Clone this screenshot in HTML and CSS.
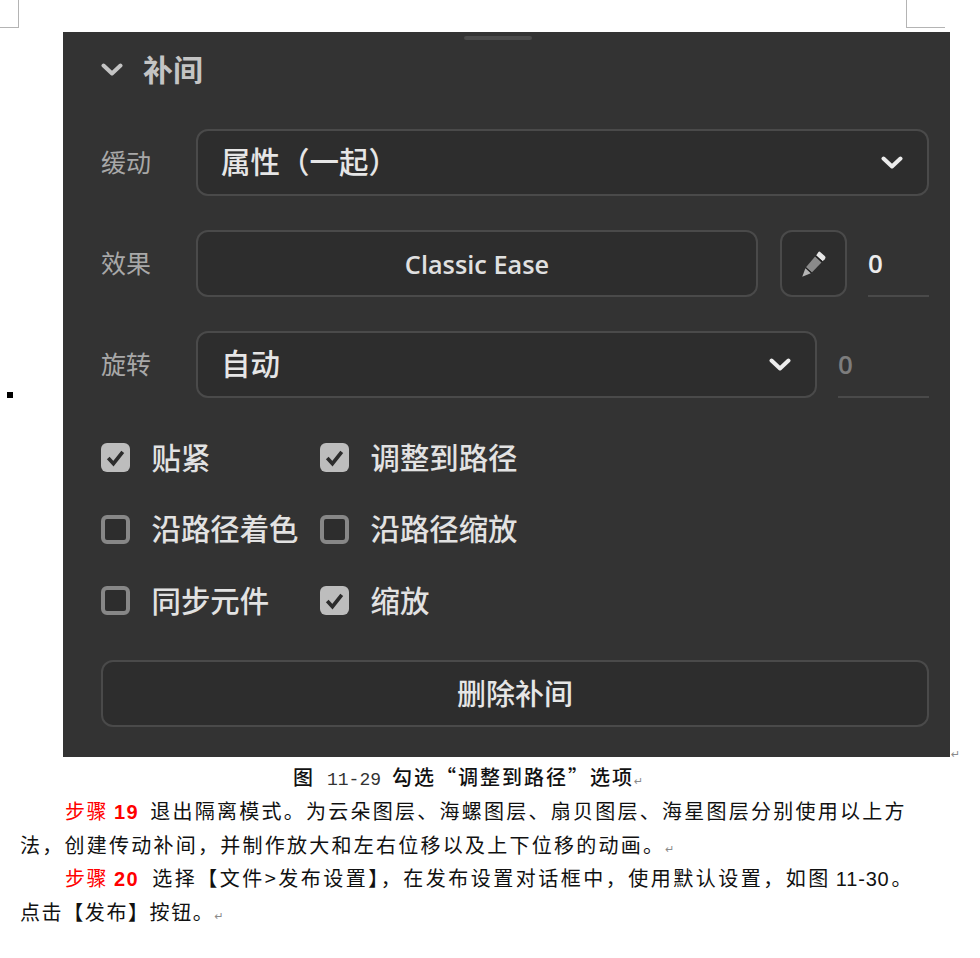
FILE: index.html
```html
<!DOCTYPE html>
<html lang="zh-CN">
<head>
    <meta charset="UTF-8">
    <title>勾选调整到路径选项</title>
    <link rel="stylesheet" href="styles.css">
</head>
<body>
    <!-- 页面裁剪标记 -->
    <div class="crop-mark crop-left"></div>
    <div class="crop-mark crop-right"></div>
    <div class="bullet"></div>

    <div class="figure">
        <div class="panel">
            <div class="handle"></div>

            <div class="panel-title">
                <svg class="chevron title-chevron" viewBox="0 0 22 14"><path d="M2.5 2.5 L11 10.5 L19.5 2.5"/></svg>
                <span>补间</span>
            </div>

            <div class="row">
                <span class="label">缓动</span>
                <div class="box select grow">
                    <span>属性（一起）</span>
                    <svg class="chevron" viewBox="0 0 22 14"><path d="M2.5 2.5 L11 10.5 L19.5 2.5"/></svg>
                </div>
            </div>

            <div class="row">
                <span class="label">效果</span>
                <div class="box center grow effect">Classic Ease</div>
                <div class="box pencil">
                    <svg viewBox="0 0 26 28" width="28" height="30">
                        <path d="M18.5 2.5 L23 6.5 Q24.5 8 23 9.5 L21 11.5 L15 6 L17 3 Q17.7 2 18.5 2.5Z" fill="#e6e6e6"/>
                        <path d="M15 6 L21 11.5 L20 12.5 L14 7Z" fill="#1d1d1d"/>
                        <path d="M14 7 L20 12.5 L11 22 L5.5 17Z" fill="#8a8a8a"/>
                        <path d="M5.5 17 L11 22 L10 22.6 L5 18Z" fill="#1d1d1d"/>
                        <path d="M5 18 L10 22.6 L2 26Z" fill="#b5b5b5"/>
                    </svg>
                </div>
                <div class="number">0</div>
            </div>

            <div class="row">
                <span class="label">旋转</span>
                <div class="box select grow">
                    <span>自动</span>
                    <svg class="chevron" viewBox="0 0 22 14"><path d="M2.5 2.5 L11 10.5 L19.5 2.5"/></svg>
                </div>
                <div class="number dim">0</div>
            </div>

            <div class="checks">
                <label class="check on"><i><svg viewBox="0 0 28 28"><path d="M7 14.5 L12 20 L21 8.5"/></svg></i><span>贴紧</span></label>
                <label class="check on"><i><svg viewBox="0 0 28 28"><path d="M7 14.5 L12 20 L21 8.5"/></svg></i><span>调整到路径</span></label>
                <label class="check"><i></i><span>沿路径着色</span></label>
                <label class="check"><i></i><span>沿路径缩放</span></label>
                <label class="check"><i></i><span>同步元件</span></label>
                <label class="check on"><i><svg viewBox="0 0 28 28"><path d="M7 14.5 L12 20 L21 8.5"/></svg></i><span>缩放</span></label>
            </div>

            <div class="box center delete"><span>删除补间</span></div>
        </div>
        <span class="mark mark-figure">↵</span>
    </div>

    <p class="caption">图<span class="fig-no">11-29</span>勾选“调整到路径”选项<span class="mark">↵</span></p>

    <div class="text">
        <p class="para"><span class="step">步骤 <b>19</b></span>退出隔离模式。为云朵图层、海螺图层、扇贝图层、海星图层分别使用以上方法，创建传动补间，并制作放大和左右位移以及上下位移的动画。<span class="mark">↵</span></p>
        <p class="para para-wide"><span class="step">步骤 <b>20</b></span>选择【文件&gt;发布设置】，在发布设置对话框中，使用默认设置，如图<span class="fig-ref">11-30</span>。<span class="tail">点击【发布】按钮。</span><span class="mark">↵</span></p>
    </div>
</body>
</html>
```

FILE: styles.css
```css
/* 页面 */
body {
    margin: 0;
    background-color: #fff;
    color: #111;
    font-family: "Noto Sans CJK SC", sans-serif;
    position: relative;
}

.crop-mark {
    position: absolute;
    top: 0;
    height: 27px;
    border-bottom: 1px solid #b4b4b4;
}

.crop-left {
    left: 0;
    width: 18px;
    border-right: 1px solid #b4b4b4;
}

.crop-right {
    left: 906px;
    width: 38px;
    border-left: 1px solid #b4b4b4;
}

.bullet {
    position: absolute;
    left: 7px;
    top: 392px;
    width: 6px;
    height: 6px;
    background-color: #000;
}

.figure {
    display: flex;
    padding: 32px 0 0 63px;
}

/* 面板 */
.panel {
    width: 887px;
    height: 725px;
    box-sizing: border-box;
    padding: 0 21px 0 38px;
    background-color: #333333;
    position: relative;
    color: #e6e6e6;
}

.handle {
    position: absolute;
    left: 401px;
    top: 4px;
    width: 68px;
    height: 4px;
    border-radius: 2px;
    background-color: #4a4a4a;
}

.panel-title {
    display: flex;
    align-items: center;
    height: 76px;
    margin-bottom: 21px;
    font-size: 30px;
    font-weight: 700;
    color: #c4c4c4;
}

.panel-title span {
    padding-bottom: 4px;
}

.title-chevron {
    stroke: #c4c4c4 !important;
    margin-right: 20px;
}

.chevron {
    width: 22px;
    height: 14px;
    fill: none;
    stroke: #ececec;
    stroke-width: 4;
    stroke-linecap: round;
    stroke-linejoin: round;
    flex-shrink: 0;
}

.row {
    display: flex;
    align-items: center;
    height: 67px;
    margin-bottom: 34px;
}

.label {
    width: 95px;
    flex-shrink: 0;
    padding-bottom: 4px;
    font-size: 25px;
    color: #a8a8a8;
}

.box {
    box-sizing: border-box;
    height: 67px;
    background-color: #2d2d2d;
    border: 2px solid #4a4a4a;
    border-radius: 12px;
    display: flex;
    align-items: center;
}

.grow {
    flex: 1;
}

.select {
    justify-content: space-between;
    padding: 0 24px 0 23px;
    font-size: 29.5px;
    font-weight: 500;
}

.select span {
    padding-bottom: 5px;
}

.center {
    justify-content: center;
}

.effect {
    font-family: "Open Sans", sans-serif;
    font-size: 25.3px;
    font-weight: 600;
    color: #e0e0e0;
}

.pencil {
    width: 67px;
    margin-left: 22px;
    justify-content: center;
}

.number {
    box-sizing: border-box;
    width: 61px;
    height: 67px;
    margin-left: 21px;
    border-bottom: 2px solid #4a4a4a;
    display: flex;
    align-items: center;
    font-family: "Open Sans", sans-serif;
    font-size: 26px;
    font-weight: 600;
    color: #ececec;
}

.number.dim {
    width: 91px;
    color: #7d7d7d;
}

/* 复选框 */
.checks {
    display: grid;
    grid-template-columns: 219px 1fr;
    grid-auto-rows: 71.5px;
    margin-top: -10px;
    height: 238px;
}

.check {
    display: flex;
    align-items: center;
    font-size: 29.4px;
    font-weight: 500;
    color: #e2e2e2;
    height: 71.5px;
}

.check span {
    padding-bottom: 4px;
}

.check i {
    box-sizing: border-box;
    width: 29px;
    height: 29px;
    margin-right: 21.5px;
    border: 4px solid #878787;
    border-radius: 6px;
    background-color: #2d2d2d;
    flex-shrink: 0;
}

.check.on i {
    border: none;
    background-color: #bdbdbd;
}

.check svg {
    display: block;
    width: 29px;
    height: 29px;
    fill: none;
    stroke: #2c2c2c;
    stroke-width: 3.5;
}

.delete {
    font-size: 29px;
    font-weight: 500;
}

.delete span {
    padding-bottom: 4px;
}

.mark {
    font-family: "DejaVu Sans", sans-serif;
    font-size: 11px;
    line-height: 0;
    color: #8a8a8a;
    letter-spacing: 0;
    font-weight: 400;
}

.mark-figure {
    margin: 716px 0 0 1px;
    height: 14px;
    line-height: 14px;
}

/* 正文 */
.caption {
    margin: -2px 0 1px 293px;
    font-size: 20px;
    font-weight: 500;
    line-height: 33px;
    letter-spacing: 2px;
}

.fig-no {
    margin: 0 11px 0 12px;
    font-family: "Liberation Mono", monospace;
    font-size: 18px;
    font-weight: 400;
    line-height: 0;
    color: #333;
    letter-spacing: 0;
}

.text {
    width: 890px;
    margin-left: 20px;
}

.para {
    margin: 0;
    font-size: 20px;
    line-height: 33.5px;
    letter-spacing: 2.25px;
    text-indent: 45px;
}

.para-wide {
    margin-right: -10px;
    letter-spacing: 2.5px;
}

.para-wide .step {
    margin-right: 13px;
}

.step {
    margin-right: 11px;
    color: #ff0000;
    line-height: 0;
    letter-spacing: 1.5px;
}

.step b {
    font-family: "Liberation Sans", sans-serif;
}

.fig-ref {
    margin: 0 2px 0 5px;
    font-family: "Liberation Sans", sans-serif;
    line-height: 0;
    letter-spacing: 0.8px;
    white-space: nowrap;
}

.tail {
    letter-spacing: 1.6px;
}
```
